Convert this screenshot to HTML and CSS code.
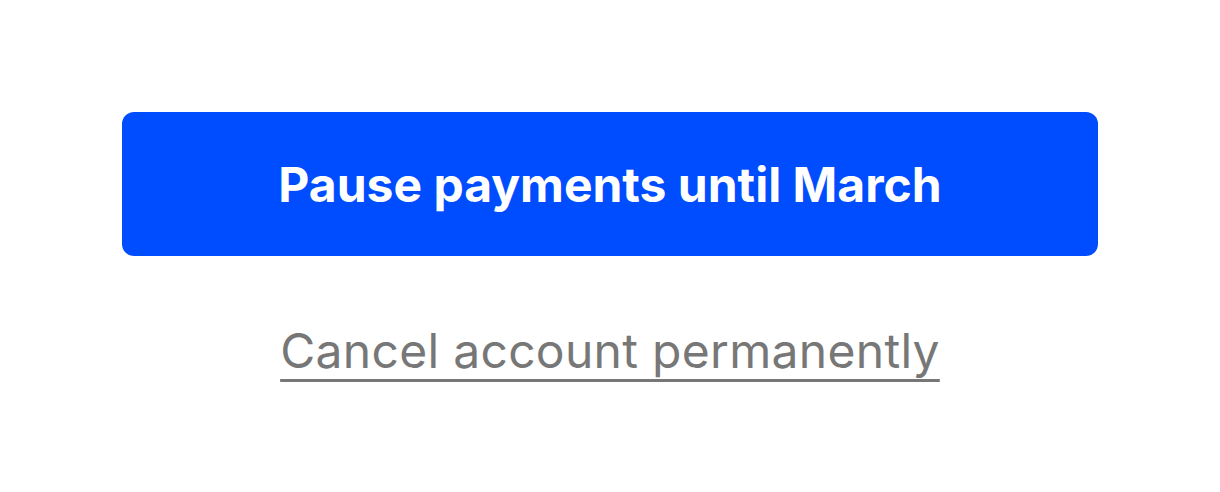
FILE: index.html
```html
<!DOCTYPE html>
<html lang="en">
<head>
    <meta charset="UTF-8">
    <meta name="viewport" content="width=device-width, initial-scale=1.0">
    <title>Pause or cancel</title>
    <link rel="stylesheet" href="styles.css">
</head>
<body>
    <div class="actions">
        <button class="pause-button">Pause payments until March</button>
        <a href="#" class="cancel-link">Cancel account permanently</a>
    </div>
</body>
</html>
```

FILE: styles.css
```css
body {
    display: flex;
    justify-content: center;
    align-items: center;
    height: 100vh;
    margin: 0;
    font-family: Inter, "Noto Sans", sans-serif;
    background-color: #fff;
}

.actions {
    display: flex;
    flex-direction: column;
    align-items: center;
    gap: 66px;
    width: 976px;
}

.pause-button {
    width: 100%;
    height: 144px;
    border: none;
    border-radius: 12px;
    background-color: #004cff;
    color: #fff;
    font-family: inherit;
    font-size: 48px;
    font-weight: 700;
    cursor: pointer;
}

.cancel-link {
    color: #777;
    font-size: 48px;
    letter-spacing: 0.3px;
    line-height: 58px;
    text-decoration: underline;
    text-decoration-thickness: 3px;
    text-underline-offset: 11px;
}
```
